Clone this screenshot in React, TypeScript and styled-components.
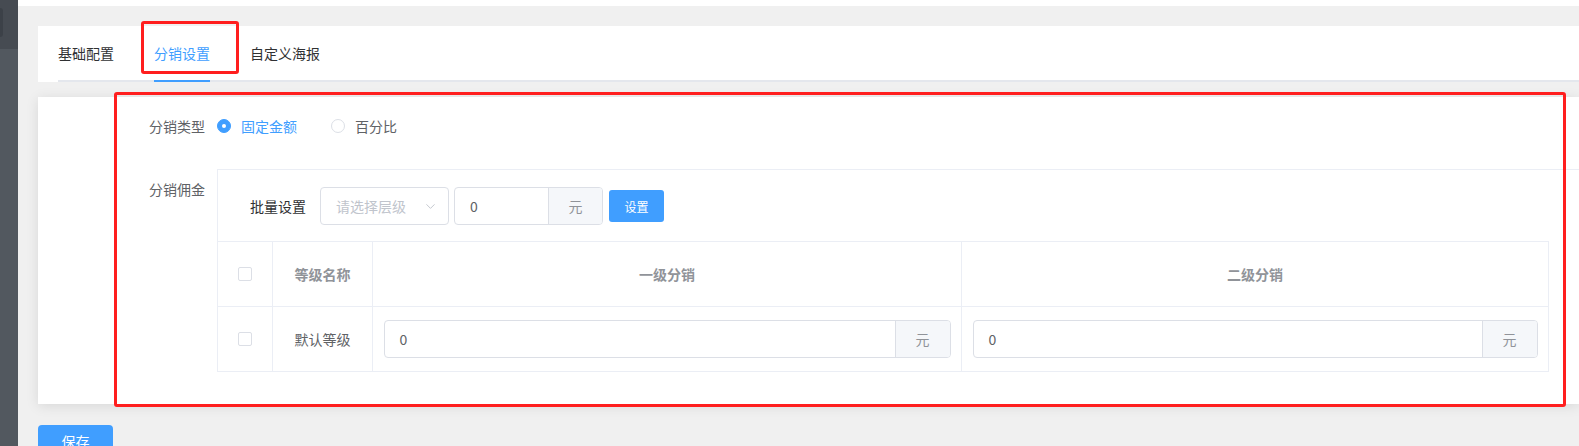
import React from 'react';
import styled, { createGlobalStyle } from 'styled-components';
import { ChevronDown } from 'lucide-react';

const GlobalStyle = createGlobalStyle`
  html, body {
    margin: 0;
    padding: 0;
    background: #f0f0f0;
    font-family: "Noto Sans CJK SC", "Noto Sans", "Liberation Sans", sans-serif;
    font-size: 14px;
  }
  * {
    box-sizing: border-box;
  }
`;

const Page = styled.div`
  position: relative;
  display: flex;
  width: 1579px;
  height: 446px;
  overflow: hidden;
`;

const Sidebar = styled.div`
  width: 18px;
  flex: none;
  display: flex;
  flex-direction: column;
  background: #52585f;
`;

const SidebarTop = styled.div`
  height: 49px;
  flex: none;
  background: #464b52;
  padding-top: 8px;
`;

const SidebarItem = styled.div`
  width: 3px;
  height: 29px;
  border-radius: 0 4px 4px 0;
  background: #3c4148;
`;

const Main = styled.div`
  flex: 1;
  min-width: 0;
  display: flex;
  flex-direction: column;
  background: #f0f0f0;
`;

const TopStrip = styled.div`
  height: 6px;
  flex: none;
  background: #fff;
`;

const Body = styled.div`
  flex: none;
  padding: 20px 0 0 20px;
  display: flex;
  flex-direction: column;
`;

const TabsCard = styled.div`
  flex: none;
  background: #fff;
  padding-left: 20px;
  height: 56px;
`;

const TabNav = styled.div`
  display: flex;
  border-bottom: 2px solid #e4e7ed;
`;

const Tab = styled.div<{ $active?: boolean }>`
  height: 54px;
  line-height: 54px;
  padding: 0 20px;
  color: ${(p) => (p.$active ? '#409eff' : '#303133')};
  position: relative;
  &:first-child {
    padding-left: 0;
  }
  ${(p) =>
    p.$active &&
    `
    &::after {
      content: '';
      position: absolute;
      left: 20px;
      right: 20px;
      bottom: -2px;
      height: 2px;
      background: #409eff;
    }
  `}
`;

const ContentCard = styled.div`
  flex: none;
  margin-top: 15px;
  height: 307px;
  background: #fff;
  box-shadow: 0 2px 12px 0 rgba(0, 0, 0, 0.1);
  padding-top: 9px;
`;

const FormItem = styled.div`
  display: flex;
  align-items: flex-start;
  & + & {
    margin-top: 23px;
  }
`;

const Label = styled.div`
  width: 179px;
  flex: none;
  text-align: right;
  padding-right: 12px;
  line-height: 40px;
  color: #606266;
`;

const RadioGroup = styled.div`
  display: flex;
  align-items: center;
  height: 40px;
`;

const Radio = styled.label<{ $checked?: boolean }>`
  display: flex;
  align-items: center;
  margin-right: 34px;
  color: ${(p) => (p.$checked ? '#409eff' : '#606266')};
`;

const RadioDot = styled.span<{ $checked?: boolean }>`
  width: 14px;
  height: 14px;
  border-radius: 50%;
  border: 1px solid ${(p) => (p.$checked ? '#409eff' : '#dcdfe6')};
  background: ${(p) => (p.$checked ? '#409eff' : '#fff')};
  margin-right: 10px;
  display: flex;
  align-items: center;
  justify-content: center;
  &::after {
    content: '';
    width: 4px;
    height: 4px;
    border-radius: 50%;
    background: #fff;
    display: ${(p) => (p.$checked ? 'block' : 'none')};
  }
`;

const CommissionBox = styled.div`
  width: 1400px;
  flex: none;
  border-top: 1px solid #ebeef5;
  border-left: 1px solid #ebeef5;
  padding-top: 17px;
`;

const BatchRow = styled.div`
  display: flex;
  align-items: center;
  padding-left: 32px;
  height: 38px;
`;

const BatchLabel = styled.span`
  color: #303133;
  margin-right: 14px;
`;

const Select = styled.div`
  width: 129px;
  height: 38px;
  border: 1px solid #dcdfe6;
  border-radius: 4px;
  display: flex;
  align-items: center;
  justify-content: space-between;
  padding: 0 10px 0 15px;
  color: #c0c4cc;
  margin-right: 5px;
`;

const InputGroup = styled.div<{ $width: number }>`
  width: ${(p) => p.$width}px;
  flex: none;
  height: 38px;
  display: flex;
  border: 1px solid #dcdfe6;
  border-radius: 4px;
  overflow: hidden;
  text-align: left;
`;

const InputValue = styled.div`
  flex: 1;
  padding-left: 15px;
  line-height: 36px;
  color: #606266;
`;

const Append = styled.div<{ $width: number }>`
  width: ${(p) => p.$width}px;
  flex: none;
  background: #f5f7fa;
  border-left: 1px solid #dcdfe6;
  color: #909399;
  display: flex;
  align-items: center;
  justify-content: center;
`;

const SmallButton = styled.button`
  margin-left: 6px;
  width: 55px;
  height: 32px;
  border: none;
  border-radius: 3px;
  background: #409eff;
  color: #fff;
  font-family: inherit;
  font-size: 12px;
`;

const Grid = styled.div`
  margin-top: 16px;
  width: 1331px;
  display: grid;
  grid-template-columns: 55px 100px 589px 587px;
  border-top: 1px solid #ebeef5;
`;

const Cell = styled.div<{ $head?: boolean; $pad?: boolean }>`
  height: 65px;
  border-right: 1px solid #ebeef5;
  border-bottom: 1px solid #ebeef5;
  display: flex;
  align-items: center;
  justify-content: center;
  padding: ${(p) => (p.$pad ? '0 11px' : '0')};
  color: ${(p) => (p.$head ? '#909399' : '#606266')};
  font-weight: ${(p) => (p.$head ? 'bold' : 'normal')};
`;

const Checkbox = styled.span`
  display: inline-block;
  width: 14px;
  height: 14px;
  border: 1px solid #dcdfe6;
  border-radius: 2px;
  background: #fff;
`;

const SaveButton = styled.button`
  margin-top: 21px;
  width: 75px;
  height: 32px;
  border: none;
  border-radius: 4px;
  background: #409eff;
  color: #fff;
  font-family: inherit;
  font-size: 14px;
  padding: 0;
`;

// red annotation frames drawn over the screenshot
const Mark = styled.div`
  position: absolute;
  border: 3px solid #ff1e1e;
  border-radius: 3px;
  pointer-events: none;
`;

export default function App() {
  return (
    <>
      <GlobalStyle />
      <Page>
        <Sidebar>
          <SidebarTop>
            <SidebarItem />
          </SidebarTop>
        </Sidebar>
        <Main>
          <TopStrip />
          <Body>
            <TabsCard>
              <TabNav>
                <Tab>基础配置</Tab>
                <Tab $active>分销设置</Tab>
                <Tab>自定义海报</Tab>
              </TabNav>
            </TabsCard>
            <ContentCard>
              <FormItem>
                <Label>分销类型</Label>
                <RadioGroup>
                  <Radio $checked>
                    <RadioDot $checked />
                    固定金额
                  </Radio>
                  <Radio>
                    <RadioDot />
                    百分比
                  </Radio>
                </RadioGroup>
              </FormItem>
              <FormItem>
                <Label>分销佣金</Label>
                <CommissionBox>
                  <BatchRow>
                    <BatchLabel>批量设置</BatchLabel>
                    <Select>
                      请选择层级
                      <ChevronDown size={15} strokeWidth={1.5} color="#c0c4cc" />
                    </Select>
                    <InputGroup $width={149}>
                      <InputValue>0</InputValue>
                      <Append $width={54}>元</Append>
                    </InputGroup>
                    <SmallButton>设置</SmallButton>
                  </BatchRow>
                  <Grid>
                    <Cell $head>
                      <Checkbox />
                    </Cell>
                    <Cell $head>等级名称</Cell>
                    <Cell $head>一级分销</Cell>
                    <Cell $head>二级分销</Cell>
                    <Cell>
                      <Checkbox />
                    </Cell>
                    <Cell>默认等级</Cell>
                    <Cell $pad>
                      <InputGroup $width={567}>
                        <InputValue>0</InputValue>
                        <Append $width={55}>元</Append>
                      </InputGroup>
                    </Cell>
                    <Cell $pad>
                      <InputGroup $width={565}>
                        <InputValue>0</InputValue>
                        <Append $width={55}>元</Append>
                      </InputGroup>
                    </Cell>
                  </Grid>
                </CommissionBox>
              </FormItem>
            </ContentCard>
            <div>
              <SaveButton>保存</SaveButton>
            </div>
          </Body>
        </Main>
        <Mark style={{ left: 141, top: 21, width: 98, height: 53 }} />
        <Mark style={{ left: 114, top: 92, width: 1452, height: 315 }} />
      </Page>
    </>
  );
}
